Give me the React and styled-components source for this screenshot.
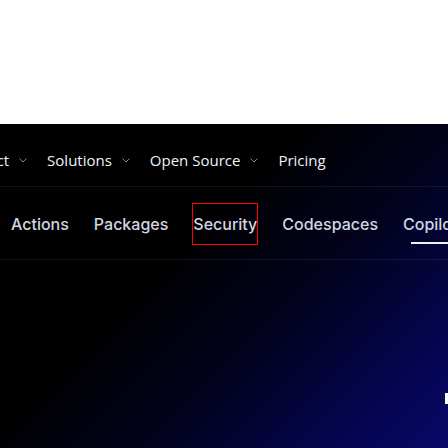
import React from 'react'
import styled, { createGlobalStyle } from 'styled-components'

const GlobalStyle = createGlobalStyle`
  html, body {
    margin: 0;
    padding: 0;
    background: #fff;
    overflow: hidden;
  }
`

const topLinks = [
  { label: 'Product', menu: true },
  { label: 'Solutions', menu: true },
  { label: 'Open Source', menu: true },
  { label: 'Pricing', menu: false },
]

const subLinks = ['Actions', 'Packages', 'Security', 'Codespaces', 'Copilot']

function Chevron() {
  return (
    <svg width="8" height="5" viewBox="0 0 8 5" fill="none">
      <path d="M0.5 0.5 L4 4 L7.5 0.5" stroke="#7d8590" strokeWidth="1" />
    </svg>
  )
}

export default function App() {
  return (
    <>
      <GlobalStyle />
      <Page>
        <WhiteBand />
        <Hero>
          <TopNav>
            {topLinks.map((l) => (
              <TopItem key={l.label}>
                {l.label}
                {l.menu && <Chevron />}
              </TopItem>
            ))}
          </TopNav>
          <Divider />
          <SubNav>
            {subLinks.map((l) => (
              <Tab key={l} focused={l === 'Security'} active={l === 'Copilot'}>
                {l}
              </Tab>
            ))}
          </SubNav>
          <Divider />
          <Body>
            <Marker />
          </Body>
        </Hero>
      </Page>
    </>
  )
}

const Page = styled.div`
  width: 448px;
  height: 448px;
  display: flex;
  flex-direction: column;
  overflow: hidden;
`

const WhiteBand = styled.div`
  height: 124px;
  flex-shrink: 0;
  background: #fff;
`

const Hero = styled.div`
  flex: 1;
  display: flex;
  flex-direction: column;
  background: linear-gradient(135deg, #000 0%, #000 38%, #02021e 62%, #05054a 82%, #08086a 100%);
`

const TopNav = styled.nav`
  display: flex;
  align-items: center;
  gap: 20px;
  margin-left: -46px;
  padding: 24px 0 14px;
  height: 24px;
  white-space: nowrap;
`

const TopItem = styled.span`
  display: flex;
  align-items: center;
  gap: 10px;
  font-family: 'Open Sans', 'Noto Sans', sans-serif;
  font-size: 15px;
  line-height: 24px;
  color: #f0f3f6;
`

const Divider = styled.div`
  height: 1px;
  background: rgba(255, 255, 255, 0.07);
`

const SubNav = styled.div`
  display: flex;
  align-items: center;
  gap: 25px;
  padding: 17px 0 15px 11px;
  white-space: nowrap;
`

const Tab = styled.a`
  position: relative;
  display: flex;
  align-items: center;
  height: 40px;
  box-sizing: border-box;
  font-family: Inter, 'Noto Sans', sans-serif;
  font-size: 16px;
  font-weight: 500;
  color: #d1d7e0;
  outline: ${(p) => (p.focused ? '1px solid #ff0000' : 'none')};

  &::after {
    content: '';
    display: ${(p) => (p.active ? 'block' : 'none')};
    position: absolute;
    left: 8px;
    right: -20px;
    bottom: 0;
    height: 2px;
    background: #f0f3f6;
  }
`

const Body = styled.div`
  flex: 1;
  position: relative;
`

const Marker = styled.div`
  position: absolute;
  right: 0;
  top: 133px;
  width: 3px;
  height: 11px;
  background: #fff;
`
